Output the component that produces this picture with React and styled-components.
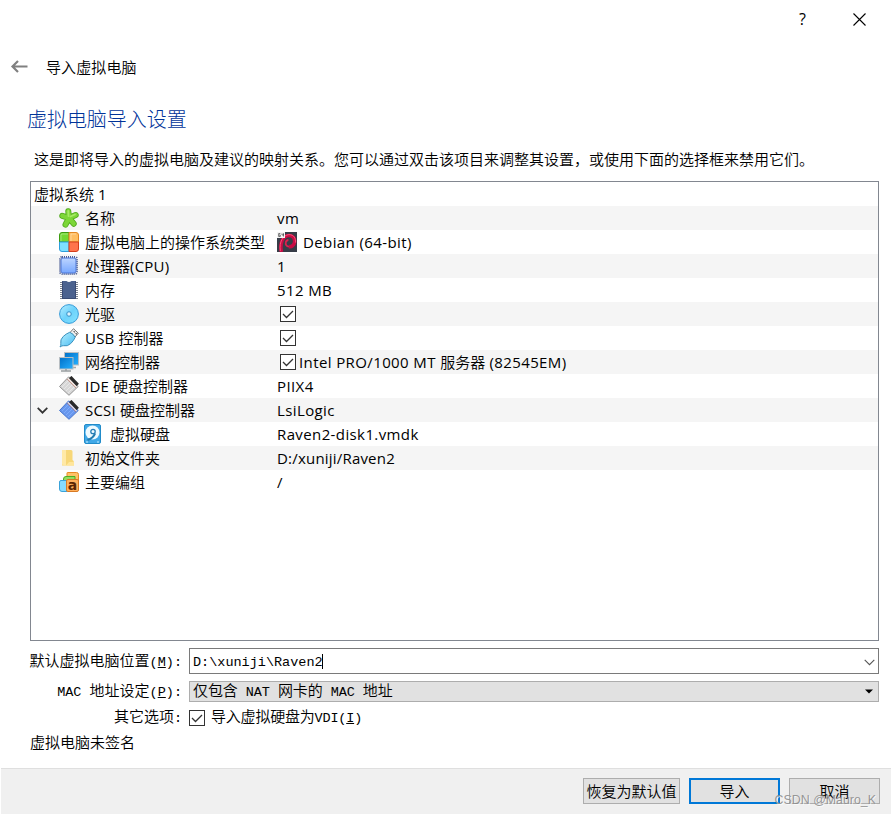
import React from 'react';
import styled, { createGlobalStyle } from 'styled-components';

const GlobalStyle = createGlobalStyle`
  * { box-sizing: border-box; }
  body { margin: 0; background: #fff; overflow: hidden; }
`;

const uiFont = '"Open Sans", "Noto Sans CJK SC", sans-serif';
const formFont = '"Liberation Mono", "Noto Sans CJK SC", monospace';

const Window = styled.div`
  width: 891px;
  height: 815px;
  display: flex;
  flex-direction: column;
  padding: 0 0 1px 1px;
  background: #fff;
  color: #000;
  font: 15px/24px ${uiFont};
  white-space: nowrap;
`;

const TitleBar = styled.header`
  height: 38px;
  display: flex;
  justify-content: flex-end;
  align-items: center;
  gap: 47px;
  padding-right: 25px;
`;

const HelpMark = styled.span`
  font: 16px/20px ${uiFont};
`;

const PageHeader = styled.div`
  height: 58px;
  display: flex;
  align-items: center;
  gap: 17px;
  padding-left: 9px;
`;

const Caption = styled.span`
  font-size: 15px;
  font-weight: 350;
  letter-spacing: 0.1px;
`;

const Title = styled.h1`
  margin: 8px 0 0 26px;
  font: 300 20px/30px "Noto Sans CJK SC", sans-serif;
  letter-spacing: -0.05px;
  color: #003399;
`;

const Description = styled.p`
  margin: 13px 0 0 33px;
  height: 34px;
  font: 350 15px/24px "Noto Sans CJK SC", sans-serif;
`;

const Tree = styled.section`
  width: 849px;
  height: 460px;
  flex: none;
  margin-left: 29px;
  border: 1px solid #828790;
`;

const TreeRow = styled.div`
  height: 24px;
  display: grid;
  grid-template-columns: 246px 1fr;
  background: ${(p) => (p.$shaded ? '#f5f5f5' : '#fff')};
`;

const NameCell = styled.div`
  display: flex;
  align-items: center;
  padding-left: ${(p) => (p.$level === 0 ? 3 : p.$level === 2 ? 51 : 6)}px;
  gap: ${(p) => (p.$level === 2 ? 8 : 6)}px;
`;

const Toggle = styled.span`
  width: 16px;
  height: 20px;
  display: flex;
  align-items: center;
`;

const ValueCell = styled.div`
  display: flex;
  align-items: center;
  gap: ${(p) => (p.$checked ? 3 : 6)}px;
  padding-left: ${(p) => (p.$checked ? 3 : 0)}px;
`;

const Label = styled.span`
  letter-spacing: ${(p) => p.$spacing || 0}px;
`;

const Han = styled.span`
  font-weight: 350;
  letter-spacing: 0;
`;

const Check = styled.span`
  width: 16px;
  height: 16px;
  flex: none;
  display: flex;
  align-items: center;
  justify-content: center;
  border: 1px solid #333;
  background: #fff;
`;

const Form = styled.div`
  display: grid;
  grid-template-columns: 152px 690px;
  grid-template-rows: 26px 28px 32px;
  column-gap: 7px;
  margin: 7px 0 0 29px;
  font: 350 15px/24px ${formFont};
`;

const FieldLabel = styled.label`
  display: flex;
  justify-content: flex-end;
  align-items: center;
  padding-top: ${(p) => p.$shift}px;
`;

const Mono = styled.span`
  font-size: 13.5px;
  white-space: pre;
`;

const LocationBox = styled.div`
  display: flex;
  align-items: center;
  padding: 3px 3px 0 3px;
  border: 1px solid #7a7a7a;
  background: #fff;
`;

const Caret = styled.span`
  width: 1px;
  height: 15px;
  margin: -2px 0 0 -1px;
  background: #000;
`;

const PolicyBox = styled.div`
  height: 21px;
  margin-top: 7px;
  display: flex;
  align-items: center;
  padding: 0 5px 0 3px;
  border: 1px solid #adadad;
  background: #e1e1e1;
`;

const PolicyText = styled.span`
  padding-top: 2px;
  letter-spacing: -0.08px;
`;

const ArrowSlot = styled.span`
  margin-left: auto;
  display: flex;
`;

const Option = styled.div`
  display: flex;
  align-items: center;
  gap: 6px;
`;

const OptionText = styled.span`
  padding-top: 2px;
  letter-spacing: -0.2px;
`;

const Signature = styled.div`
  margin: -4px 0 0 29px;
  height: 24px;
  font: 350 15px/24px "Noto Sans CJK SC", sans-serif;
`;

const Footer = styled.footer`
  margin-top: auto;
  height: 46px;
  display: flex;
  justify-content: flex-end;
  gap: 9px;
  padding: 9px 11px 0 0;
  border-top: 1px solid #dfdfdf;
  background: #f0f0f0;
  position: relative;
`;

const Button = styled.button`
  width: ${(p) => p.$width}px;
  height: 26px;
  padding: 0;
  border: ${(p) => (p.$primary ? '2px solid #0078d7' : '1px solid #adadad')};
  background: #e1e1e1;
  color: #000;
  font: 350 15px/22px "Noto Sans CJK SC", sans-serif;
`;

const Watermark = styled.span`
  position: absolute;
  right: 15px;
  bottom: 6px;
  font: 12.4px/16px "Liberation Sans", sans-serif;
  color: rgba(140, 140, 140, 0.9);
  text-shadow: 1px 1px 0 rgba(255, 255, 255, 0.7);
`;

const Glyph = styled.svg.attrs({ width: 20, height: 20, viewBox: '0 0 20 20', fill: 'none' })`
  flex: none;
  display: block;
`;

const armPath = 'M10 10 9.300 3.200M10 10 16.700 7M10 10 14.700 15.700M10 10 6.500 16.600M10 10 3.300 7.800';

const NameIcon = () => (
  <Glyph strokeLinecap="round">
    <path d={armPath} stroke="#4fa81a" strokeWidth="6" />
    <path d={armPath} stroke="#7cd638" strokeWidth="4.400" />
    <path d="M9.500 8 9.200 3M11.500 8.500 16 6.500" stroke="#a5e965" strokeWidth="1.800" />
  </Glyph>
);

const OsIcon = () => (
  <Glyph strokeWidth="1">
    <path d="M10 .5H3Q.5.500.500 3v7H10Z" fill="#73d832" stroke="#3c9b10" />
    <path d="M10 .5h7q2.500 0 2.500 2.500v7H10Z" fill="#ffbe62" stroke="#e38622" />
    <path d="M10 19.500H3q-2.500 0-2.500-2.500v-7H10Z" fill="#7ee0ff" stroke="#2d9fdc" />
    <path d="M10 19.500h7q2.500 0 2.500-2.500v-7H10Z" fill="#ff744c" stroke="#d33e1c" />
    <path d="M2 9V3q0-1 1-1h6M12 9V2h5" stroke="#fff" opacity=".35" />
  </Glyph>
);

const CpuIcon = () => (
  <Glyph>
    <rect x="1" y="1" width="17" height="17" rx="2" stroke="#4a5d94" strokeWidth="2" strokeDasharray="1 1" />
    <rect x="2" y="2" width="15" height="15" rx="2" fill="url(#cpu)" stroke="#4c76d6" />
    <defs><linearGradient id="cpu" x1="0" y1="0" x2="0" y2="1"><stop stopColor="#bdd5ff" /><stop offset="1" stopColor="#77a7ff" /></linearGradient></defs>
  </Glyph>
);

const RamIcon = () => (
  <Glyph>
    <path d="M2 2v17M18 2v17" stroke="#7e8491" strokeWidth="2" strokeDasharray="1 1" />
    <path d="M3 1h4.500q2.500 2 5 0H17v18H3Z" fill="#4b628f" />
    <path d="M3.500 1.500V18.500h13v-17" stroke="#3a4c74" />
  </Glyph>
);

const DiscIcon = () => (
  <Glyph>
    <circle cx="10" cy="10" r="9.400" fill="url(#disc)" stroke="#379bd8" />
    <circle cx="10" cy="10" r="2.300" fill="#c8eafa" stroke="#3f93c7" />
    <circle cx="10" cy="10" r=".8" fill="#fff" />
    <defs><linearGradient id="disc" x1="0" y1="0" x2="1" y2="1"><stop stopColor="#b6edff" /><stop offset=".5" stopColor="#6dd2fb" /><stop offset="1" stopColor="#86e3ff" /></linearGradient></defs>
  </Glyph>
);

const UsbIcon = () => (
  <Glyph>
    <path d="m11 4.500 3.500-3.800 4.800 4.500L16 9Z" fill="#eee" stroke="#777" />
    <path d="M14.500 3.500h1v1M16.500 5.500h1v1" stroke="#555" />
    <path d="M1 19q1.200-1.700.8-3.400Q1 11.600 4.200 8.500 7 5.800 10.700 4.300q3.800 1.300 5.500 5-1.500 3.400-4.500 6.300-3.300 3.100-7 2.100Q3 17.400 1 19Z" fill="url(#usb)" stroke="#3c91bd" />
    <defs><linearGradient id="usb" x1="0" y1="0" x2="1" y2="1"><stop stopColor="#b9f1ff" /><stop offset="1" stopColor="#46baf2" /></linearGradient></defs>
  </Glyph>
);

const NetworkIcon = () => (
  <Glyph>
    <path d="M10 15.500h7" stroke="#a5a9ab" strokeWidth="1.500" />
    <rect x="5.500" y=".5" width="14" height="12.500" fill="url(#net)" stroke="#b8bec2" />
    <rect x=".5" y="5.500" width="13.500" height="11.500" fill="url(#net)" stroke="#b8bec2" />
    <path d="M7 17v1.500M2 19h10" stroke="#989da0" strokeWidth="1.500" />
    <defs><linearGradient id="net" x1="0" y1="0" x2="1" y2="1"><stop stopColor="#0070c8" /><stop offset="1" stopColor="#26b0ff" /></linearGradient></defs>
  </Glyph>
);

const ControllerIcon = ({ blue }) => (
  <Glyph>
    <path d="m.5 10.500 9.200-9.700 9.500 9.700-9.200 8.800Z" fill={blue ? '#6897ed' : '#d7d7d7'} stroke={blue ? '#4574ce' : '#929292'} />
    <path d="m3 11 7-7M5 13l7-7M7 15l7-7M9 17l7-7" stroke={blue ? '#88b1ff' : '#eee'} strokeWidth=".7" />
    <path d="m11.200 1 7.500 8" stroke="#292929" strokeWidth="3.300" />
    <path d="m8.800 2.200 8.900 9" stroke={blue ? '#efe0e0' : '#f2e5df'} strokeWidth="1.200" />
    <path d="m8 3 9 9" stroke="#b76a59" strokeWidth=".6" />
  </Glyph>
);

const DiskIcon = () => (
  <Glyph>
    <rect x="2.500" y=".5" width="16" height="19" rx="1.500" fill="#40a8e7" stroke="#218bc9" />
    <circle cx="10.500" cy="8.500" r="7" fill="#eefaff" />
    <circle cx="11" cy="7.500" r="2.200" stroke="#267eb7" strokeWidth="1.300" />
    <path d="M13 9.500q-1.500 4.500-7.500 6.500" stroke="#247caf" strokeWidth="2.200" />
    <path d="M4 18h2M15 18h2" stroke="#c7efff" />
  </Glyph>
);

const FolderIcon = () => (
  <Glyph>
    <path d="M3 2h9q1.500 0 1.500 1.500V12q1.500.5 1.500 2.500v3H3Z" fill="#f7d778" />
    <path d="M3 2h4v16l-4-1.500Z" fill="#ffe9a7" />
    <path d="M10 14h5v3.500H7Z" fill="#ffe69b" />
  </Glyph>
);

const GroupLetter = styled.text`
  font: bold 14px "DejaVu Sans", sans-serif;
`;

const GroupIcon = () => (
  <Glyph>
    <path d="M8 8V1q0-.5.500-.5h9q2 0 2 2V12" fill="#ffc267" stroke="#e88b24" />
    <path d="M4.500 15V7q0-2.500 2.500-2.500h9V11" fill="#94dd60" stroke="#4fac23" />
    <path d="M8 19.500H3q-2.500 0-2.500-2.500v-7q0-1.500 1.500-1.500h6Z" fill="#87dbff" stroke="#3aa2d9" />
    <rect x="7.500" y="7.500" width="12" height="12" rx="1.500" fill="#ffb05c" stroke="#d87a24" />
    <GroupLetter x="8.700" y="18" fill="#5a2502">a</GroupLetter>
  </Glyph>
);

const DebianIcon = () => (
  <Glyph>
    <path d="M0 0h20v20H0Z" fill="#373d48" />
    <path d="M4.500 20C2.500 12 5.500 3.500 12 3.500c4 0 6 3 5.600 6.500-.4 3.500-3.100 5-5.600 4.600" stroke="#c90c45" strokeWidth="3.600" />
    <path d="M12 14.600c-2.500-.3-3.700-2-3.200-4.200.3-1.500 1.400-2.300 2.600-2.400" stroke="#df204f" strokeWidth="1.800" />
    <path d="M3.300 19C2 10 6 3 12 2.600c5 0 7 4 6.400 8" stroke="#ff587d" strokeWidth=".9" />
    <path d="M0 0h8v6H0Z" fill="#f4f4f4" />
    <path d="M3.300 1.500H1.700v3h1.600V3H1.700M5 1.500V3h1.500V1.500v3" stroke="#555" strokeWidth=".8" />
  </Glyph>
);

const CheckBox = () => (
  <Check>
    <svg width="14" height="14" viewBox="0 0 14 14" fill="none">
      <path d="m2 7 3.500 3.500L12 4" stroke="#333" strokeWidth="1.300" />
    </svg>
  </Check>
);

const Chevron = ({ color = '#333', width = 11, stroke = 1.7 }) => (
  <svg width={width} height="7" viewBox="0 0 11 7" fill="none">
    <path d="m.7.900 4.800 4.800L10.300.9" stroke={color} strokeWidth={stroke} />
  </svg>
);

// Chinese runs are set slightly lighter than the Latin text beside them.
const MixedText = ({ children, spacing }) => (
  <Label $spacing={spacing}>
    {children.split(/([\u4e00-\u9fff]+)/).map((part, i) => (i % 2 ? <Han key={i}>{part}</Han> : part))}
  </Label>
);

const rows = [
  { name: '虚拟系统 1', level: 0 },
  { name: '名称', icon: <NameIcon />, value: 'vm' },
  { name: '虚拟电脑上的操作系统类型', icon: <OsIcon />, value: 'Debian (64-bit)', valueIcon: <DebianIcon /> },
  { name: '处理器(CPU)', icon: <CpuIcon />, value: '1' },
  { name: '内存', icon: <RamIcon />, value: '512 MB' },
  { name: '光驱', icon: <DiscIcon />, checked: true },
  { name: 'USB 控制器', icon: <UsbIcon />, checked: true },
  { name: '网络控制器', icon: <NetworkIcon />, checked: true, value: 'Intel PRO/1000 MT 服务器 (82545EM)' },
  { name: 'IDE 硬盘控制器', icon: <ControllerIcon />, value: 'PIIX4' },
  { name: 'SCSI 硬盘控制器', icon: <ControllerIcon blue />, value: 'LsiLogic', expanded: true },
  { name: '虚拟硬盘', icon: <DiskIcon />, value: 'Raven2-disk1.vmdk', level: 2 },
  { name: '初始文件夹', icon: <FolderIcon />, value: 'D:/xuniji/Raven2', spacing: 0.2 },
  { name: '主要编组', icon: <GroupIcon />, value: '/' },
];

export default function App() {
  return (
    <Window>
      <GlobalStyle />
      <TitleBar>
        <HelpMark>?</HelpMark>
        <svg width="13" height="13" viewBox="0 0 13 13"><path d="m.5.500 12 12m0-12-12 12" stroke="#000" strokeWidth="1.100" /></svg>
      </TitleBar>
      <PageHeader>
        <svg width="19" height="14" viewBox="0 0 19 14" fill="none">
          <path d="M17.500 6.500H2.500M8 1 2.500 6.500 8 12" stroke="#808080" strokeWidth="2.200" />
        </svg>
        <Caption>导入虚拟电脑</Caption>
      </PageHeader>
      <Title>虚拟电脑导入设置</Title>
      <Description>这是即将导入的虚拟电脑及建议的映射关系。您可以通过双击该项目来调整其设置，或使用下面的选择框来禁用它们。</Description>
      <Tree>
        {rows.map(({ name, icon, value, valueIcon, checked, expanded, spacing = 0.39, level = 1 }, i) => (
          <TreeRow key={name} $shaded={i % 2 === 1}>
            <NameCell $level={level}>
              {level === 1 && <Toggle>{expanded && <Chevron />}</Toggle>}
              {icon}
              <MixedText spacing={0.2}>{name}</MixedText>
            </NameCell>
            <ValueCell $checked={checked}>
              {checked && <CheckBox />}
              {valueIcon}
              {value && <MixedText spacing={spacing}>{value}</MixedText>}
            </ValueCell>
          </TreeRow>
        ))}
      </Tree>
      <Form>
        <FieldLabel $shift={3}>默认虚拟电脑位置<Mono>(<u>M</u>):</Mono></FieldLabel>
        <LocationBox>
          <Mono>D:\xuniji\Raven2</Mono><Caret />
          <ArrowSlot><Chevron color="#555" stroke={1.1} /></ArrowSlot>
        </LocationBox>
        <FieldLabel $shift={9}><Mono>MAC </Mono>地址设定<Mono>(<u>P</u>):</Mono></FieldLabel>
        <PolicyBox>
          <PolicyText>仅包含<Mono> NAT </Mono>网卡的<Mono> MAC </Mono>地址</PolicyText>
          <ArrowSlot><svg width="8" height="5" viewBox="0 0 8 5"><path d="M0 .5h8l-4 4Z" fill="#000" /></svg></ArrowSlot>
        </PolicyBox>
        <FieldLabel $shift={2}>其它选项<Mono>:</Mono></FieldLabel>
        <Option><CheckBox /><OptionText>导入虚拟硬盘为<Mono>VDI(<u>I</u>)</Mono></OptionText></Option>
      </Form>
      <Signature>虚拟电脑未签名</Signature>
      <Footer>
        <Button $width={97}>恢复为默认值</Button>
        <Button $width={91} $primary>导入</Button>
        <Button $width={91}>取消</Button>
        <Watermark>CSDN @Mauro_K</Watermark>
      </Footer>
    </Window>
  );
}
